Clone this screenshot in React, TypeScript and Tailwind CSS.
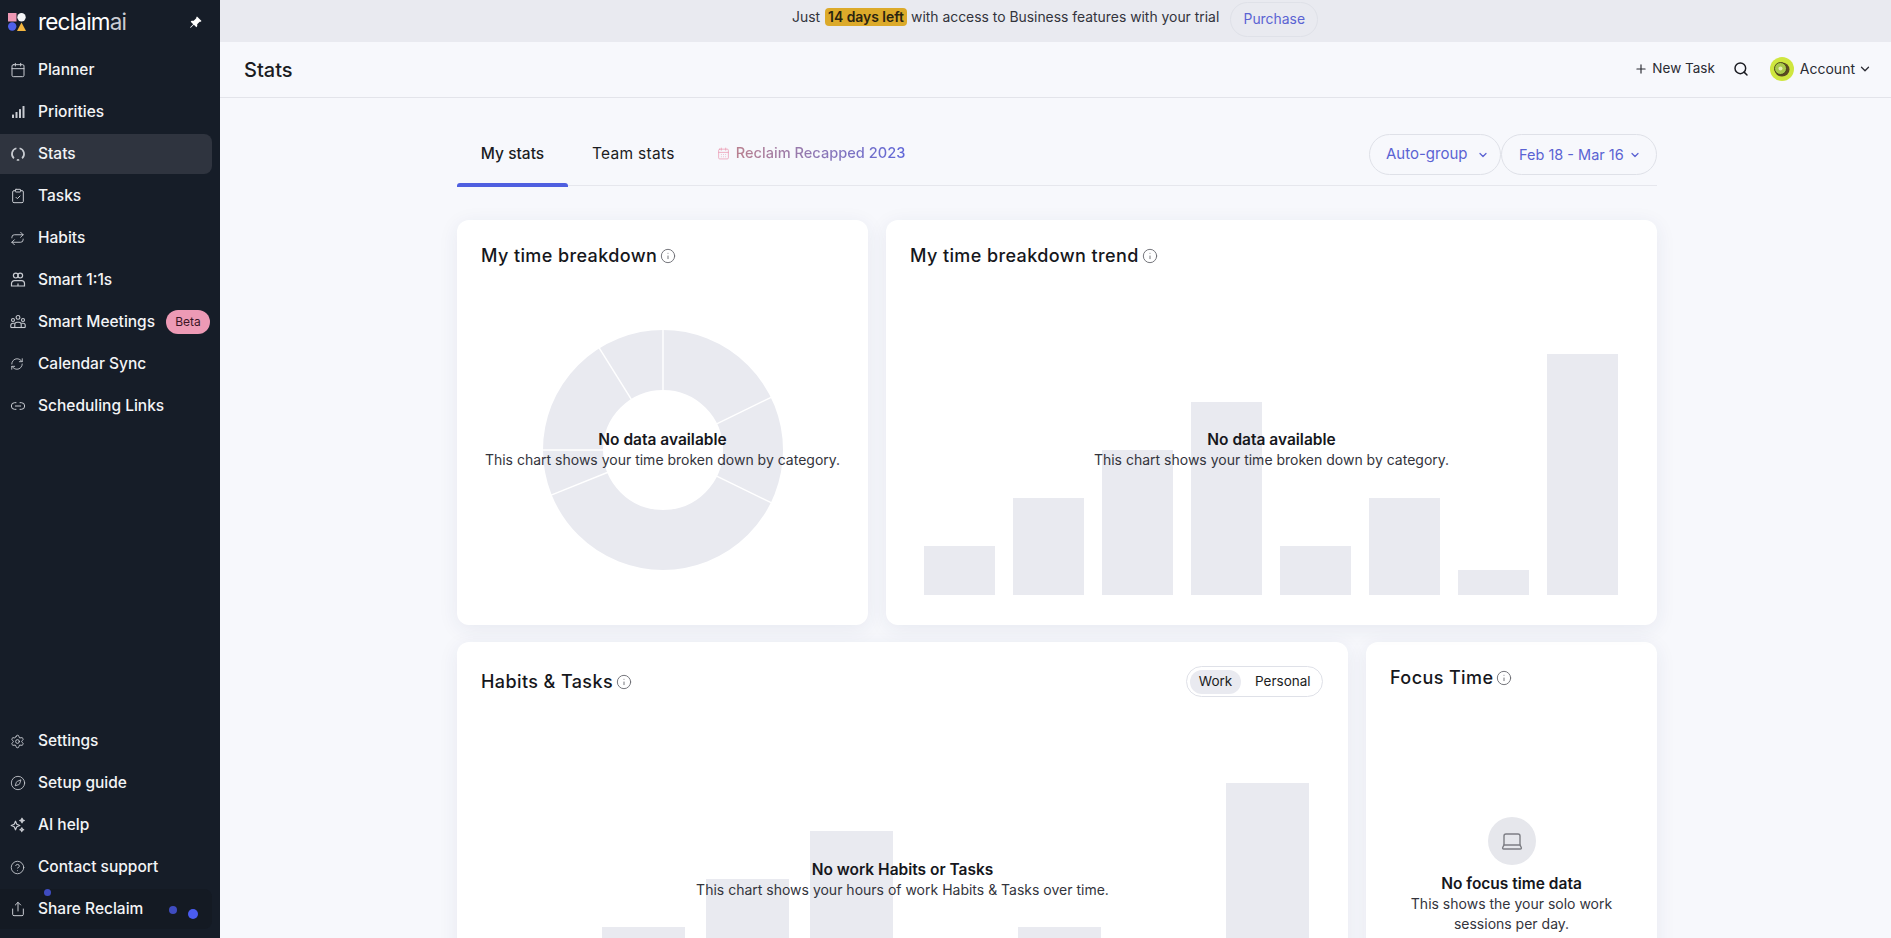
import {
  Calendar,
  CalendarDays,
  ChevronDown,
  CircleHelp,
  ClipboardCheck,
  Compass,
  Info,
  Laptop,
  Link2,
  Plus,
  RefreshCw,
  Repeat,
  Search,
  Settings,
  Share,
} from "lucide-react";
import { BsPinAngleFill } from "react-icons/bs";

const font = "font-['Inter','Liberation_Sans',sans-serif]";

const StatsIcon = () => (
  <svg width="16" height="16" viewBox="0 0 16 16" fill="none" stroke="currentColor" strokeWidth="1.7">
    <path d="M6.4 2.2A6 6 0 0 0 3.9 12.4" />
    <path d="M9.6 2.2A6 6 0 0 1 12.1 12.4" />
    <path d="M6.8 13.9A6 6 0 0 0 9.2 13.9" />
  </svg>
);

const SignalIcon = () => (
  <svg width="16" height="16" viewBox="0 0 16 16" fill="currentColor">
    <rect x="2" y="10.5" width="2" height="3.5" rx="0.5" />
    <rect x="5.5" y="8" width="2" height="6" rx="0.5" />
    <rect x="9" y="5" width="2" height="9" rx="0.5" />
    <rect x="12.5" y="2" width="2" height="12" rx="0.5" />
  </svg>
);

const OneOnOneIcon = () => (
  <svg width="16" height="16" viewBox="0 0 16 16" fill="none" stroke="currentColor" strokeWidth="1.2">
    <circle cx="5.8" cy="3.6" r="2.4" />
    <circle cx="10.2" cy="3.6" r="2.4" />
    <path d="M1.5 14v-2.4A3 3 0 0 1 4.5 8.6h7a3 3 0 0 1 3 3V14z" />
    <path d="M8 14v-2.5" />
  </svg>
);

const MeetingIcon = () => (
  <svg width="16" height="16" viewBox="0 0 16 16" fill="none" stroke="currentColor" strokeWidth="1.1">
    <circle cx="8" cy="3.4" r="1.9" />
    <circle cx="3" cy="6" r="1.5" />
    <circle cx="13" cy="6" r="1.5" />
    <path d="M4.8 13.5v-3a2.2 2.2 0 0 1 2.2-2.2h2a2.2 2.2 0 0 1 2.2 2.2v3" />
    <path d="M0.8 13.5v-2.2a2 2 0 0 1 2-2h2" />
    <path d="M15.2 13.5v-2.2a2 2 0 0 0-2-2h-2" />
    <path d="M0.8 13.5h14.4" />
  </svg>
);

const SparkleIcon = () => (
  <svg width="16" height="16" viewBox="0 0 16 16" fill="none" stroke="currentColor" strokeWidth="1.2" strokeLinejoin="round">
    <path d="M5.5 4.2L6.8 7.2L9.8 8.5L6.8 9.8L5.5 12.8L4.2 9.8L1.2 8.5L4.2 7.2z" />
    <path d="M12 1.2L12.7 2.8L14.3 3.5L12.7 4.2L12 5.8L11.3 4.2L9.7 3.5L11.3 2.8z" fill="currentColor" />
    <path d="M11.8 10.8L12.4 12.1L13.7 12.7L12.4 13.3L11.8 14.6L11.2 13.3L9.9 12.7L11.2 12.1z" />
  </svg>
);

const navTop = [
  { label: "Planner", icon: <Calendar size={16} strokeWidth={1.5} /> },
  { label: "Priorities", icon: <SignalIcon /> },
  { label: "Stats", icon: <StatsIcon />, active: true },
  { label: "Tasks", icon: <ClipboardCheck size={16} strokeWidth={1.5} /> },
  { label: "Habits", icon: <Repeat size={15} strokeWidth={1.5} /> },
  { label: "Smart 1:1s", icon: <OneOnOneIcon /> },
  { label: "Smart Meetings", icon: <MeetingIcon />, beta: true },
  { label: "Calendar Sync", icon: <RefreshCw size={14} strokeWidth={1.5} /> },
  { label: "Scheduling Links", icon: <Link2 size={16} strokeWidth={1.5} /> },
];

const navBottom = [
  { label: "Settings", icon: <Settings size={15} strokeWidth={1.5} /> },
  { label: "Setup guide", icon: <Compass size={16} strokeWidth={1.3} /> },
  { label: "AI help", icon: <SparkleIcon /> },
  { label: "Contact support", icon: <CircleHelp size={15} strokeWidth={1.4} /> },
];

const bars = [49, 97, 145, 193, 49, 97, 25, 241];

const NavItem = ({ label, icon, active, beta }: { label: string; icon: React.ReactNode; active?: boolean; beta?: boolean }) => (
  <div className={`flex h-[40px] w-[212px] items-center rounded-r-lg pl-[10px] text-[15.5px] font-medium text-[#f3f4f6] ${active ? "bg-[#2f343f]" : ""}`}>
    <span className="flex w-[28px] shrink-0 items-center text-[#c8cbd1]">{icon}</span>
    <span className="whitespace-nowrap">{label}</span>
    {beta && (
      <span className="ml-auto mr-[2px] flex h-[24px] w-[44px] items-center justify-center rounded-full bg-[#ed9ab5] text-[12px] font-normal text-[#3b1526]">
        Beta
      </span>
    )}
  </div>
);

const Sidebar = () => (
  <aside className="flex h-full w-[220px] shrink-0 flex-col bg-[#161d28]">
    <div className="flex h-[50px] items-center pb-[6px] pl-[8px] pr-[18px]">
      <svg width="18" height="18" viewBox="0 0 18 18" className="mr-[12px] shrink-0">
        <rect x="0" y="0" width="8.5" height="8.5" fill="#ee98b4" />
        <circle cx="13.5" cy="4.2" r="4.2" fill="#f4f4f6" />
        <circle cx="4.2" cy="13.5" r="4.2" fill="#4f60e8" />
        <path d="M13.5 9.5L18 18H9z" fill="#f4b63f" />
      </svg>
      <span className="text-[22.5px] leading-none tracking-[-0.8px] text-white">
        reclaim<span className="text-[#c9ccd2]">ai</span>
      </span>
      <BsPinAngleFill size={13} className="ml-auto text-white" />
    </div>
    <nav className="flex flex-col gap-[2px]">
      {navTop.map((item) => (
        <NavItem key={item.label} {...item} />
      ))}
    </nav>
    <nav className="relative mt-auto mb-[9px] flex flex-col gap-[2px]">
      {navBottom.map((item) => (
        <NavItem key={item.label} {...item} />
      ))}
      <div className="flex h-[40px] w-[212px] items-center rounded-r-lg bg-[#141a23] pl-[10px] text-[15.5px] font-medium text-[#f3f4f6]">
        <span className="flex w-[28px] items-center text-[#c8cbd1]">
          <Share size={16} strokeWidth={1.5} />
        </span>
        Share Reclaim
      </div>
      <span className="absolute bottom-[33px] left-[44px] h-[7px] w-[7px] rounded-full bg-[#3f4cc0]" />
      <span className="absolute bottom-[15px] left-[169px] h-[8px] w-[8px] rounded-full bg-[#3f4cc0]" />
      <span className="absolute bottom-[10px] left-[188px] h-[10px] w-[10px] rounded-full bg-[#4a5cf0]" />
    </nav>
  </aside>
);

const Banner = () => (
  <div className="flex h-[42px] shrink-0 items-center bg-[#e9eaf0] pb-[8px] pl-[572px] text-[13.9px] text-[#33343c]">
    <span>Just</span>
    <span className="ml-[5px] flex h-[18px] items-center rounded-[4px] bg-[#dcaa2a] px-[3px] font-semibold text-[#2a2410]">14 days left</span>
    <span className="ml-[4px] whitespace-nowrap">with access to Business features with your trial</span>
    <span className="relative top-[2px] ml-[11px] flex h-[35px] w-[88px] items-center justify-center rounded-full border border-[#dfe1e8] text-[#5b63d3]">Purchase</span>
  </div>
);

const Header = () => (
  <header className="flex h-[56px] shrink-0 items-center border-b border-[#e3e4ea] pl-[24px] pr-[19px]">
    <h1 className="text-[20px] font-medium text-[#1b1c22]">Stats</h1>
    <div className="ml-auto flex items-center pb-[2px] text-[13.5px] text-[#2a2b33]">
      <Plus size={14} strokeWidth={2} className="mr-[4px]" />
      <span>New Task</span>
      <Search size={16} strokeWidth={2.2} className="ml-[18px] text-[#1b1c22]" />
      <svg width="24" height="24" viewBox="0 0 24 24" className="ml-[21px]">
        <circle cx="12" cy="12" r="12" fill="#cfe63f" />
        <ellipse cx="12" cy="12.5" rx="7.5" ry="7" fill="#5b4a22" />
        <ellipse cx="10.5" cy="11.5" rx="6" ry="6" fill="#a9c94a" stroke="#3d3216" strokeWidth="0.8" />
        <circle cx="10.5" cy="11.5" r="2" fill="#e5edb5" />
      </svg>
      <span className="ml-[6px] text-[14px]">Account</span>
      <ChevronDown size={14} strokeWidth={2.2} className="ml-[3px]" />
    </div>
  </header>
);

const Tabs = () => (
  <div className="flex h-[52px] items-start border-b border-[#e6e7ed]">
    <div className="relative flex h-[52px] w-[111px] justify-center pt-[8px] text-[15.5px] font-medium text-[#1b1c22]">
      My stats
      <span className="absolute bottom-[-1px] left-0 h-[4px] w-full rounded-t-[3px] bg-[#4f5fe0]" />
    </div>
    <div className="ml-[24px] pt-[8px] text-[15.5px] font-normal tracking-[0.3px] text-[#1b1c22]">Team stats</div>
    <div className="ml-[42px] flex items-center pt-[9px]">
      <CalendarDays size={13} strokeWidth={1.4} className="mr-[6px] text-[#eb9ab4]" />
      <span className="bg-gradient-to-r from-[#b9808f] to-[#5f66d8] bg-clip-text text-[14.6px] font-medium text-transparent">Reclaim Recapped 2023</span>
    </div>
    <div className="ml-auto flex h-[41px]">
      <div className="flex h-full w-[132px] items-center rounded-full border border-[#dfe1e8] pl-[16px] text-[15px] text-[#5b63d3]">
        Auto-group
        <ChevronDown size={12} strokeWidth={2.5} className="ml-auto mr-[11px]" />
      </div>
      <div className="flex h-full w-[156px] items-center rounded-full border border-[#dfe1e8] pl-[17px] text-[14.5px] text-[#5b63d3]">
        Feb 18 - Mar 16
        <ChevronDown size={12} strokeWidth={2.5} className="ml-auto mr-[15px]" />
      </div>
    </div>
  </div>
);

const CardTitle = ({ children }: { children: string }) => (
  <h2 className="flex items-center text-[18px] font-medium tracking-[0.4px] text-[#16171c]">
    {children}
    <Info size={16} strokeWidth={1.4} className="ml-[3px] text-[#6b6c72]" />
  </h2>
);

const Empty = ({ title, text }: { title: string; text: string }) => (
  <div className="absolute left-0 right-0 flex flex-col items-center whitespace-nowrap text-center">
    <div className="text-[15.5px] leading-[20px] font-semibold text-[#16171c]">{title}</div>
    <div className="text-[14px] leading-[19px] text-[#33343c]">{text}</div>
  </div>
);

const Donut = () => (
  <svg width="240" height="240" viewBox="-120 -120 240 240">
    <circle r="90" fill="none" stroke="#e9eaf0" strokeWidth="60" />
    {[0, 64, 116, 248, 270, 328].map((a) => (
      <line key={a} x1="0" y1="-58" x2="0" y2="-122" stroke="#fff" strokeWidth="1.4" transform={`rotate(${a})`} />
    ))}
  </svg>
);

const Dashboard = () => (
  <main className="ml-[237px] w-[1200px] pt-[36px]">
    <Tabs />
    <div className="mt-[34px] flex gap-[18px]">
      <section className="relative flex h-[405px] w-[411px] flex-col rounded-xl bg-white px-[24px] pt-[22px] shadow-[0_4px_20px_rgba(40,50,100,0.08)]">
        <CardTitle>My time breakdown</CardTitle>
        <div className="mt-[61px] flex justify-center">
          <Donut />
        </div>
        <div className="absolute inset-x-0 top-[210px]">
          <Empty title="No data available" text="This chart shows your time broken down by category." />
        </div>
      </section>
      <section className="relative flex h-[405px] w-[771px] flex-col rounded-xl bg-white pl-[24px] pt-[22px] shadow-[0_4px_20px_rgba(40,50,100,0.08)]">
        <CardTitle>My time breakdown trend</CardTitle>
        <div className="mt-auto mb-[30px] ml-[14px] flex items-end gap-[18px]">
          {bars.map((h, i) => (
            <div key={i} className="w-[71px] bg-[#e9eaf0]" style={{ height: h }} />
          ))}
        </div>
        <div className="absolute inset-x-0 top-[210px]">
          <Empty title="No data available" text="This chart shows your time broken down by category." />
        </div>
      </section>
    </div>
    <div className="mt-[17px] flex gap-[18px]">
      <section className="relative h-[420px] w-[891px] rounded-xl bg-white pl-[24px] pt-[24px] shadow-[0_4px_20px_rgba(40,50,100,0.08)]">
        <div className="flex items-center justify-between pr-[25px]">
          <CardTitle>{"Habits & Tasks"}</CardTitle>
          <div className="flex h-[31px] w-[137px] items-center rounded-full border border-[#dfe1e8] px-[3px] text-[13.5px] text-[#1b1c22]">
            <span className="flex h-[24px] w-[51px] items-center justify-center rounded-full bg-[#e9eaf0]">Work</span>
            <span className="ml-[14px]">Personal</span>
          </div>
        </div>
        <div className="absolute left-[41px] top-[58px] flex h-[324px] items-end gap-[21px]">
          {bars.map((h, i) => (
            <div key={i} className="w-[83px] bg-[#e9eaf0]" style={{ height: h }} />
          ))}
        </div>
        <div className="absolute inset-x-0 top-[218px]">
          <Empty title="No work Habits or Tasks" text="This chart shows your hours of work Habits & Tasks over time." />
        </div>
      </section>
      <section className="h-[420px] w-[291px] rounded-xl bg-white pt-[22px] shadow-[0_4px_20px_rgba(40,50,100,0.08)]">
        <div className="pl-[24px]">
          <CardTitle>Focus Time</CardTitle>
        </div>
        <div className="mt-[126px] flex flex-col items-center text-center">
          <div className="flex h-[48px] w-[48px] items-center justify-center rounded-full bg-[#e6e7ec]">
            <Laptop size={24} strokeWidth={1.4} className="text-[#7d7e84]" />
          </div>
          <div className="mt-[9px] text-[15.5px] leading-[20px] font-semibold text-[#16171c]">No focus time data</div>
          <div className="w-[220px] text-[14px] leading-[20px] text-[#33343c]">This shows the your solo work sessions per day.</div>
        </div>
      </section>
    </div>
  </main>
);

export default function App() {
  return (
    <div className={`flex h-[938px] w-[1891px] overflow-hidden bg-[#f7f8fc] ${font}`}>
      <Sidebar />
      <div className="flex min-w-0 flex-1 flex-col">
        <Banner />
        <Header />
        <div className="flex-1 overflow-hidden">
          <Dashboard />
        </div>
      </div>
    </div>
  );
}
